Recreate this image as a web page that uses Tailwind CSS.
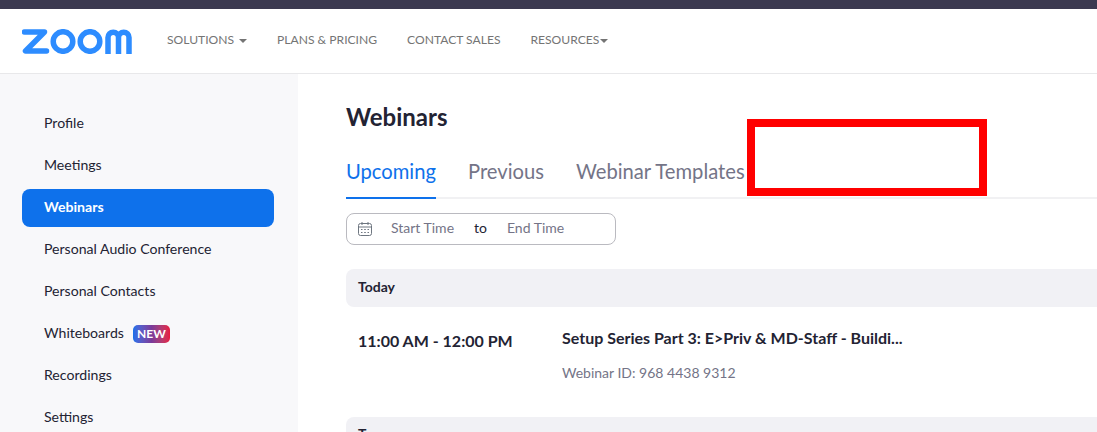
<!DOCTYPE html>
<html lang="en">
  <head>
    <meta charset="UTF-8" />
    <meta name="viewport" content="width=device-width, initial-scale=1.0" />
    <title>Webinars - Zoom</title>
    <script src="https://cdn.jsdelivr.net/npm/@tailwindcss/browser@4"></script>
  </head>
  <body class="relative h-[432px] overflow-hidden bg-white font-['Lato','Noto_Sans',sans-serif]">
    <div class="h-[9px] bg-[#3b3950]"></div>

    <header class="flex h-[65px] items-center border-b border-[#e8e8ea] bg-white pl-[22px]">
      <svg class="w-[110px] h-[25px]" viewBox="0 0 110 25" fill="none" stroke="#2d8cff" stroke-width="5.5">
        <path d="M2.5 3H22.5L3.5 22H24.5" stroke-linecap="round" stroke-linejoin="round" />
        <circle cx="41" cy="12.5" r="9.8" />
        <circle cx="68" cy="12.5" r="9.8" />
        <path d="M86 25V8.5A5.25 5.25 0 0 1 96.5 8.5V25M96.5 8.5A5.25 5.25 0 0 1 107 8.5V25" />
      </svg>
      <nav class="mb-[1px] ml-[35px] flex items-center gap-[30px] text-[12.1px] text-[#747474]">
        <a href="#" class="flex items-center gap-[5px]">SOLUTIONS <span class="mt-[1px] border-x-[4px] border-t-[4px] border-x-transparent border-t-[#747474]"></span></a>
        <a href="#">PLANS &amp; PRICING</a>
        <a href="#">CONTACT SALES</a>
        <a href="#" class="flex items-center gap-[1px]">RESOURCES <span class="mt-[1px] border-x-[4px] border-t-[4px] border-x-transparent border-t-[#747474]"></span></a>
      </nav>
    </header>

    <div class="flex h-[358px]">
      <aside class="w-[298px] shrink-0 bg-[#f8f8fa] pt-[31px] pr-[24px] pl-[22px]">
        <ul class="flex flex-col gap-[4px] text-[14.1px] leading-[36px] text-[#232333]">
          <li class="h-[38px] pl-[22px]">Profile</li>
          <li class="h-[38px] pl-[22px]">Meetings</li>
          <li class="h-[38px] rounded-[8px] bg-[#0e71eb] pl-[22px] font-bold text-white">Webinars</li>
          <li class="h-[38px] pl-[22px]">Personal Audio Conference</li>
          <li class="h-[38px] pl-[22px]">Personal Contacts</li>
          <li class="flex h-[38px] items-center pl-[22px]">
            <span class="mb-[2px]">Whiteboards</span>
            <span class="ml-[9px] flex h-[18px] w-[37px] items-center justify-center rounded-[5px] bg-gradient-to-r from-[#0e71eb] via-[#7a3a9a] to-[#e8173d] text-[12px] leading-none font-bold text-white">NEW</span>
          </li>
          <li class="h-[38px] pl-[22px]">Recordings</li>
          <li class="h-[38px] pl-[22px]">Settings</li>
        </ul>
      </aside>

      <main class="min-w-0 flex-1 overflow-hidden pl-[48px]">
        <h1 class="mt-[28px] text-[24px] leading-[30px] font-bold text-[#232333]">Webinars</h1>
        <div class="mt-[24px] flex h-[43px] gap-[32px] border-b-2 border-[#f1f1f3] text-[20.2px] leading-[30px] text-[#747487]">
          <a href="#" class="-mb-[2px] h-[43px] border-b-2 border-[#0e71eb] text-[#0e71eb]">Upcoming</a>
          <a href="#">Previous</a>
          <a href="#">Webinar Templates</a>
        </div>

        <div class="mt-[14px] flex h-[32px] w-[270px] items-center rounded-[8px] border border-[#babac0] pl-[10px] text-[14px] text-[#747487]">
          <svg class="h-[16px] w-[16px]" viewBox="0 0 16 16" fill="none" stroke="#6e7680" stroke-width="1">
            <rect x="1.5" y="2.5" width="13" height="12" rx="2" />
            <path d="M1.5 6H14.5M5 1V4M11 1V4" />
            <path d="M4 8.5H5.5M7.2 8.5H8.8M10.5 8.5H12M4 11.5H5.5M7.2 11.5H8.8M10.5 11.5H12" />
          </svg>
          <span class="mb-[4px] ml-[18px]">Start Time</span>
          <span class="mb-[4px] ml-[20px] text-[#232333]">to</span>
          <span class="mb-[4px] ml-[20px]">End Time</span>
        </div>

        <div class="mt-[24px] flex h-[38px] items-center rounded-l-[8px] bg-[#f1f1f5] pb-[4px] pl-[12px] text-[14px] font-bold text-[#232333]">Today</div>

        <div class="flex h-[110px] pl-[12px]">
          <div class="mt-[22px] h-[24px] w-[204px] text-[16px] leading-[24px] font-bold text-[#232333]">11:00 AM - 12:00 PM</div>
          <div class="mt-[19px]">
            <div class="text-[16px] leading-[24px] font-bold text-[#232333]">Setup Series Part 3: E&gt;Priv &amp; MD-Staff - Buildi...</div>
            <div class="mt-[13px] text-[14px] leading-[20px] text-[#747487]">Webinar ID: 968 4438 9312</div>
          </div>
        </div>

        <div class="h-[38px] rounded-l-[8px] bg-[#f1f1f5] pl-[12px] text-[14px] leading-[34px] font-bold text-[#232333]">Tomorrow</div>
      </main>
    </div>

    <div class="absolute top-[119px] left-[747px] h-[77px] w-[240px] border-[8px] border-[#ff0000]"></div>
  </body>
</html>
